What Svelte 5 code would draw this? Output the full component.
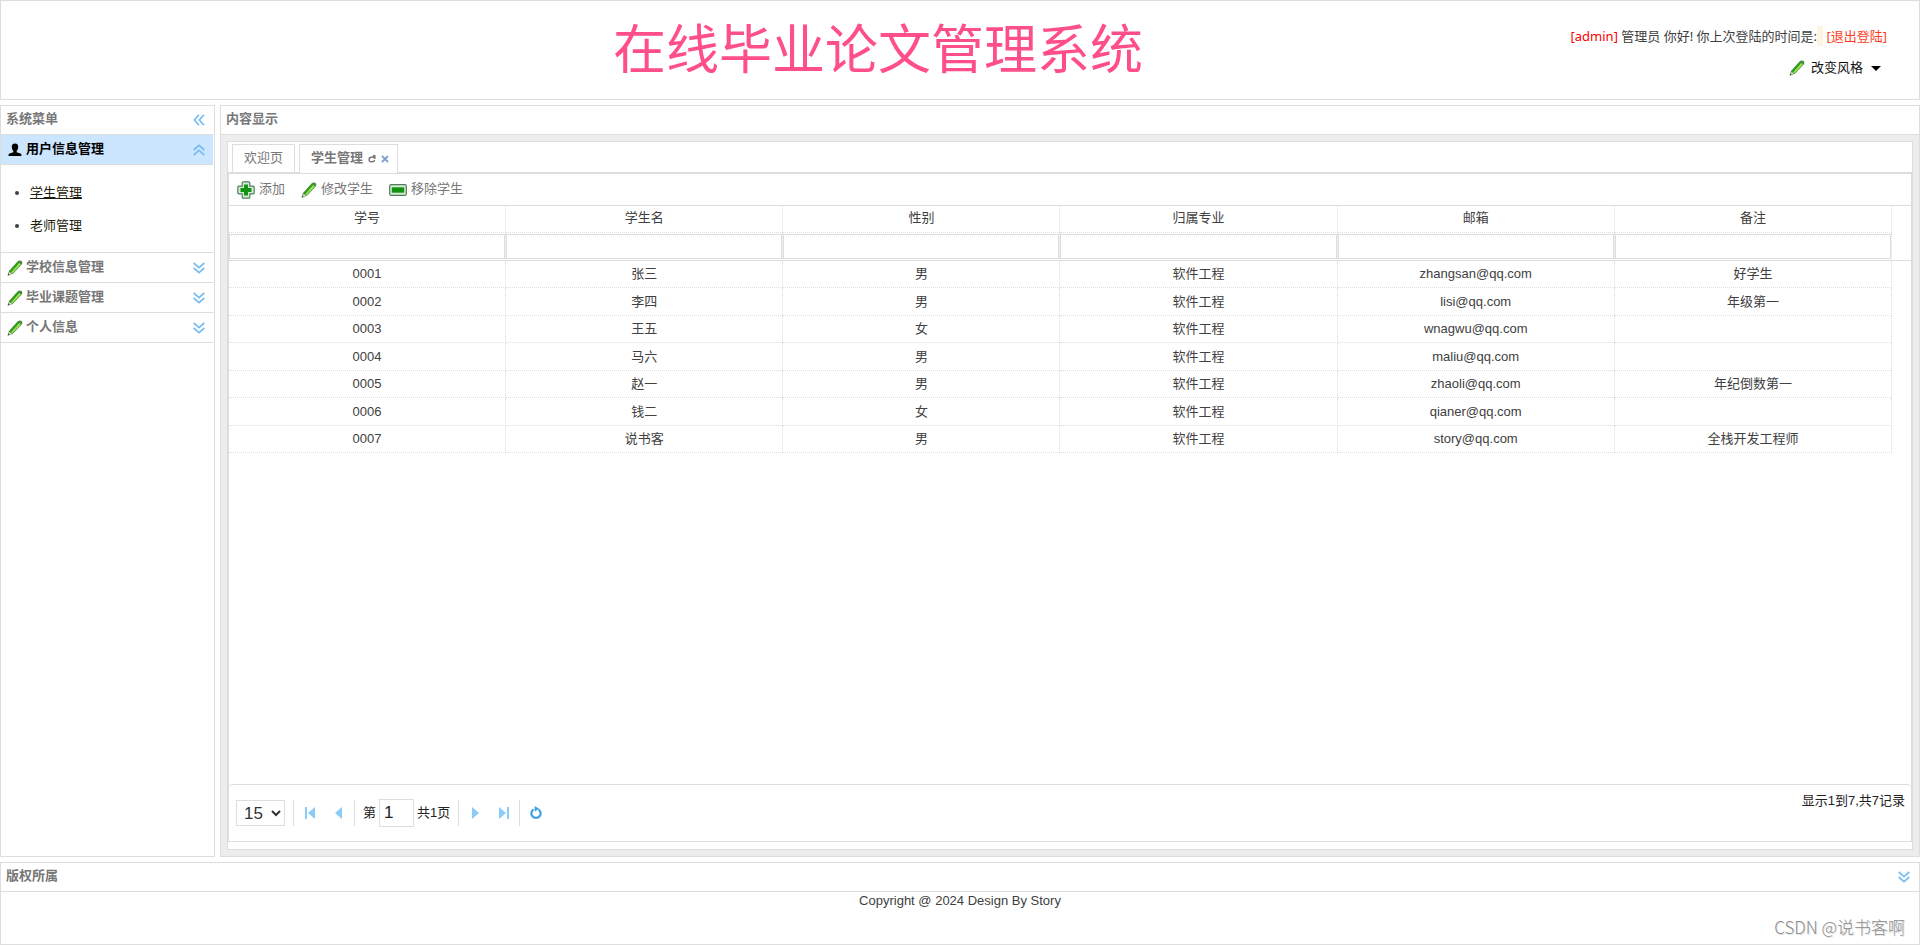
<script>
  const columns = ['学号', '学生名', '性别', '归属专业', '邮箱', '备注'];
  const rows = [
    ['0001', '张三', '男', '软件工程', 'zhangsan@qq.com', '好学生'],
    ['0002', '李四', '男', '软件工程', 'lisi@qq.com', '年级第一'],
    ['0003', '王五', '女', '软件工程', 'wnagwu@qq.com', ''],
    ['0004', '马六', '男', '软件工程', 'maliu@qq.com', ''],
    ['0005', '赵一', '男', '软件工程', 'zhaoli@qq.com', '年纪倒数第一'],
    ['0006', '钱二', '女', '软件工程', 'qianer@qq.com', ''],
    ['0007', '说书客', '男', '软件工程', 'story@qq.com', '全栈开发工程师']
  ];
  const groups = ['学校信息管理', '毕业课题管理', '个人信息'];
  let filters = $state(columns.map(() => ''));
  let size = $state('15');
  let page = $state('1');
</script>

{#snippet pencil()}
  <svg class="icon" width="16" height="16" viewBox="0 0 16 16" aria-hidden="true">
    <path d="M.7 15.5 2 11 10.5 1.6Q12.4-.1 14.6 1.1 16.1 2.6 14.5 4.8L5.6 14Z" fill="#4b8a3f" />
    <path d="M2.8 11.4 11 2.3 12.6 3.2 4.2 12.7Z" fill="#22a516" />
    <path d="M4 12.4 12.2 3 13.9 4.5 5.4 13.3Z" fill="#9fe052" />
    <path d="M2.4 12 5 13.7 1.8 14.8Z" fill="#e3e8cf" />
    <path d="M.7 15.5 1.3 13.6 2.7 14.9Z" fill="#2c5230" />
  </svg>
{/snippet}

{#snippet chevrons(angle)}
  <svg class="icon" width="12" height="12" viewBox="0 0 12 12" aria-hidden="true">
    <g transform="rotate({angle} 6 6)" fill="none" stroke="#78bdf2" stroke-width="1.7">
      <path d="M.7 1 6 5.6 11.3 1M.7 6 6 10.6 11.3 6" />
    </g>
  </svg>
{/snippet}

<div class="page">
  <header class="banner">
    <h1>在线毕业论文管理系统</h1>
    <div class="account">
      <p>
        <span class="admin">[admin]</span> 管理员 你好! 你上次登陆的时间是:<span class="time"></span>
        <a class="logout" href="#logout">[退出登陆]</a>
      </p>
      <button class="theme">
        {@render pencil()}
        <span>改变风格</span>
        <svg class="icon" width="10" height="5" viewBox="0 0 10 5" aria-hidden="true"><path d="M0 0H10L5 5Z" fill="#000" /></svg>
      </button>
    </div>
  </header>

  <div class="middle">
    <aside class="panel">
      <div class="title">
        <h2>系统菜单</h2>
        <button aria-label="收起菜单">{@render chevrons(90)}</button>
      </div>
      <nav>
        <button class="group open">
          <svg class="icon" width="16" height="16" viewBox="0 0 16 16" aria-hidden="true">
            <path d="M8 1.5C10.3 1.5 11.4 3 11.2 5.2 11.1 6.8 10.5 8 9.7 8.7V10.2L13.5 11.5C14.2 11.8 14.5 12.5 14.5 14H1.5C1.5 12.5 1.8 11.8 2.5 11.5L6.3 10.2V8.7C5.5 8 4.9 6.8 4.8 5.2 4.6 3 5.7 1.5 8 1.5Z" fill="#000" />
          </svg>
          <span>用户信息管理</span>
          {@render chevrons(180)}
        </button>
        <ul>
          <li><a class="current" href="#students">学生管理</a></li>
          <li><a href="#teachers">老师管理</a></li>
        </ul>
        {#each groups as name}
          <button class="group">
            {@render pencil()}
            <span>{name}</span>
            {@render chevrons(0)}
          </button>
        {/each}
      </nav>
    </aside>

    <main class="panel">
      <div class="title"><h2>内容显示</h2></div>
      <div class="body">
        <div class="tabs">
          <div class="strip">
            <button class="tab">欢迎页</button>
            <div class="tab active">
              <span>学生管理</span>
              <button aria-label="刷新">
                <svg class="icon" width="8" height="8" viewBox="0 0 8 8" aria-hidden="true">
                  <path d="M6 2.3H3A1.8 1.8 0 0 0 1.2 4.2V5A1.8 1.8 0 0 0 3 6.8H4.6A1.8 1.8 0 0 0 6.4 5" fill="none" stroke="#777" stroke-width="1.5" />
                  <path d="M4.7 0H7.5V4H6Z" fill="#777" />
                </svg>
              </button>
              <button aria-label="关闭">
                <svg class="icon" width="8" height="8" viewBox="0 0 8 8" aria-hidden="true"><path d="M1 1 7 7M7 1 1 7" stroke="#7f9fd0" stroke-width="1.8" /></svg>
              </button>
            </div>
          </div>
          <div class="content">
            <div class="toolbar">
              <button>
                <svg class="icon" width="18" height="18" viewBox="0 0 18 18" aria-hidden="true">
                  <path d="M6.2.8H11.8Q12.8.8 12.8 1.8V5.2H16.2Q17.2 5.2 17.2 6.2V11.8Q17.2 12.8 16.2 12.8H12.8V16.2Q12.8 17.2 11.8 17.2H6.2Q5.2 17.2 5.2 16.2V12.8H1.8Q.8 12.8.8 11.8V6.2Q.8 5.2 1.8 5.2H5.2V1.8Q5.2.8 6.2.8Z" fill="#d7ead7" stroke="#4d8058" stroke-width="1.2" />
                  <path d="M7 3.5H11V7H14.5V11H11V14.5H7V11H3.5V7H7Z" fill="#129312" />
                </svg><span>添加</span>
              </button>
              <button>{@render pencil()}<span>修改学生</span></button>
              <button>
                <svg class="icon" width="18" height="12" viewBox="0 0 18 12" aria-hidden="true">
                  <rect x=".7" y=".7" width="16.6" height="10.6" rx="1.2" fill="#d7ead7" stroke="#4d8058" stroke-width="1.2" />
                  <rect x="2.8" y="3.3" width="12.4" height="5.4" fill="#129312" />
                </svg><span>移除学生</span>
              </button>
            </div>
            <table>
              <thead>
                <tr>
                  {#each columns as name}<th scope="col">{name}</th>{/each}
                  <td class="gutter"></td>
                </tr>
                <tr class="filters">
                  {#each columns as name, i}
                    <td><input type="text" aria-label={name} bind:value={filters[i]} /></td>
                  {/each}
                  <td class="gutter"></td>
                </tr>
              </thead>
              <tbody>
                {#each rows as row}
                  <tr>
                    {#each row as cell}<td>{cell}</td>{/each}
                    <td class="gutter"></td>
                  </tr>
                {/each}
              </tbody>
            </table>
            <div class="pager">
              <select aria-label="每页记录数" bind:value={size}>
                <option>15</option>
                <option>30</option>
                <option>50</option>
              </select>
              <div class="steps">
                <button aria-label="首页"><svg class="icon" width="12" height="12" viewBox="0 0 12 12"><path d="M1 0H3V12H1ZM11 0V12L4 6Z" fill="#8accf7" /></svg></button>
                <button aria-label="上一页"><svg class="icon" width="12" height="12" viewBox="0 0 12 12"><path d="M9 0V12L2 6Z" fill="#8accf7" /></svg></button>
              </div>
              <label class="number">第<input type="text" bind:value={page} /><span>共1页</span></label>
              <div class="steps">
                <button aria-label="下一页"><svg class="icon" width="12" height="12" viewBox="0 0 12 12"><path d="M3 0V12L10 6Z" fill="#8accf7" /></svg></button>
                <button aria-label="末页"><svg class="icon" width="12" height="12" viewBox="0 0 12 12"><path d="M9 0H11V12H9ZM1 0V12L8 6Z" fill="#8accf7" /></svg></button>
              </div>
              <div class="steps">
                <button aria-label="刷新列表">
                  <svg class="icon" width="12" height="14" viewBox="0 0 12 14">
                    <path d="M3.6 3.4A4.6 4.6 0 1 0 8.4 3.4" fill="none" stroke="#3d9fe8" stroke-width="2.2" />
                    <path d="M4.5 0 9 2.6 4.8 5.8Z" fill="#3d9fe8" />
                  </svg>
                </button>
              </div>
              <p class="info">显示1到7,共7记录</p>
            </div>
          </div>
        </div>
      </div>
    </main>
  </div>

  <footer class="panel">
    <div class="title">
      <h2>版权所属</h2>
      <button aria-label="收起版权">{@render chevrons(0)}</button>
    </div>
    <p>Copyright @ 2024 Design By Story</p>
    <span class="mark">CSDN @说书客啊</span>
  </footer>
</div>

<style>
  :global(body) {
    margin: 0;
    background: #fff;
  }
  .page {
    box-sizing: border-box;
    min-height: 100vh;
    display: flex;
    flex-direction: column;
    gap: 5px;
    color: #404040;
    font: 13px/20px 'Liberation Sans', 'Noto Sans CJK SC', sans-serif;
  }
  .page :global(*) {
    box-sizing: border-box;
  }
  h1, h2, p, ul {
    margin: 0;
    padding: 0;
  }
  button {
    display: flex;
    align-items: center;
    padding: 0;
    border: 0;
    background: none;
    color: inherit;
    font: inherit;
    cursor: pointer;
  }
  .icon {
    display: block;
    flex: none;
  }
  .banner {
    display: grid;
    grid-template-columns: 1fr auto 1fr;
    height: 100px;
    padding: 0 32px 0 0;
    border: 1px solid #ddd;
  }
  h1 {
    grid-column: 2;
    margin-right: 132px;
    color: #ff4f8b;
    font-size: 53px;
    font-weight: 400;
    line-height: 100px;
    white-space: nowrap;
  }
  .account {
    display: flex;
    flex-direction: column;
    align-items: flex-end;
    gap: 12px;
    padding-top: 25px;
    white-space: nowrap;
  }
  .account p {
    font-family: 'Noto Sans', 'Noto Sans CJK SC', sans-serif;
  }
  .admin {
    color: #f00;
  }
  .time {
    padding: 1px 3px;
    background: #fdf5e1;
  }
  .logout {
    color: #ff3b20;
    text-decoration: none;
  }
  .theme {
    gap: 6px;
    margin-right: 6px;
    color: #111;
  }
  .theme span {
    margin-right: 2px;
  }
  .middle {
    flex: 1;
    display: flex;
    gap: 5px;
  }
  .panel {
    border: 1px solid #ddd;
  }
  aside {
    flex: none;
    width: 215px;
    padding-right: 1px;
  }
  .title {
    display: flex;
    align-items: center;
    justify-content: space-between;
    height: 29px;
    padding: 0 9px 0 5px;
    border-bottom: 1px solid #ddd;
  }
  aside .title {
    padding-right: 8px;
  }
  h2, .group span, .tab span, .toolbar span {
    padding-bottom: 2px;
  }
  h2 {
    color: #777;
    font-size: 13px;
    font-weight: 700;
  }
  .group {
    width: 100%;
    height: 30px;
    gap: 3px;
    padding: 0 8px 0 6px;
    border-bottom: 1px solid #ddd;
    color: #777;
    font-weight: 700;
    text-align: left;
  }
  .group span {
    flex: 1;
  }
  .open {
    background: #cce6ff;
    color: #000;
  }
  ul {
    padding: 11px 0 10px 29px;
    border-bottom: 1px solid #ddd;
    line-height: 33px;
  }
  li a {
    color: #1c1c0a;
    text-decoration: none;
  }
  li a.current {
    text-decoration: underline;
  }
  main {
    flex: 1;
    min-width: 0;
    display: flex;
    flex-direction: column;
  }
  .body {
    flex: 1;
    display: flex;
    padding: 6px;
    background: #ededed;
  }
  .tabs {
    flex: 1;
    min-width: 0;
    display: flex;
    flex-direction: column;
    padding-bottom: 7px;
    border: 1px solid #ddd;
    background: #fff;
  }
  .strip {
    display: flex;
    gap: 4px;
    height: 31px;
    padding: 2px 4px 0;
    border-bottom: 1px solid #ddd;
  }
  .tab {
    display: flex;
    align-items: center;
    gap: 5px;
    height: 28px;
    padding: 0 11px 2px;
    border: 1px solid #ddd;
    border-bottom: 0;
    color: #777;
  }
  .active {
    height: 29px;
    padding: 0 8px 0 11px;
    background: #fff;
    font-weight: 700;
  }
  .content {
    flex: 1;
    display: flex;
    flex-direction: column;
    border: 1px solid #ddd;
  }
  .toolbar {
    display: flex;
    gap: 16px;
    height: 32px;
    padding: 0 8px;
    border-bottom: 1px solid #ddd;
    color: #777;
  }
  .toolbar button {
    gap: 4px;
  }
  table {
    width: 100%;
    table-layout: fixed;
    border-collapse: separate;
    border-spacing: 0;
    text-align: center;
  }
  th, td {
    height: 27px;
    padding: 0;
    border-right: 1px dotted #ddd;
    border-bottom: 1px dotted #ddd;
    font-weight: 400;
  }
  th {
    padding-bottom: 2px;
  }
  tbody tr:nth-child(even) td {
    height: 28px;
  }
  .gutter {
    width: 19px;
  }
  tr .gutter {
    border-right: 0;
    border-bottom: 0;
  }
  .filters td {
    height: 28px;
    border-bottom: 1px solid #ddd;
  }
  .filters input {
    display: block;
    width: 100%;
    height: 25px;
    border: 1px solid #ddd;
    outline: 0;
  }
  .filters .gutter {
    border-bottom: 1px solid #ddd;
  }
  .pager {
    display: flex;
    align-items: center;
    height: 57px;
    margin-top: auto;
    padding: 0 6px 0 7px;
    border-top: 1px solid #ddd;
    border-radius: 4px 4px 0 0;
    color: #222;
  }
  select {
    width: 49px;
    height: 26px;
    margin-right: 8px;
    padding: 0 0 0 3px;
    border: 1px solid #ddd;
    background: #fff;
    color: #333;
    font: 17px 'Liberation Sans', sans-serif;
  }
  .steps {
    display: flex;
    gap: 17px;
    height: 26px;
    padding: 0 9px 0 10px;
    border-left: 1px solid #ddd;
  }
  .number {
    display: flex;
    align-items: center;
    height: 26px;
    padding: 0 8px;
    border-left: 1px solid #ddd;
  }
  .number input {
    width: 35px;
    height: 28px;
    margin: 0 3px;
    padding: 0 4px;
    border: 1px solid #ddd;
    color: #222;
    font: 17px 'Liberation Sans', sans-serif;
  }
  .info {
    align-self: flex-start;
    margin-left: auto;
    padding-top: 6px;
  }
  footer {
    position: relative;
    height: 83px;
  }
  footer p {
    line-height: 18px;
    text-align: center;
  }
  .mark {
    position: absolute;
    right: 14px;
    bottom: 4px;
    color: #8c8c8c;
    font-family: 'Noto Sans CJK SC', sans-serif;
    font-size: 17px;
    font-weight: 300;
    line-height: 26px;
    text-shadow: 1px 1px 0 #e4e4e4;
  }
</style>
